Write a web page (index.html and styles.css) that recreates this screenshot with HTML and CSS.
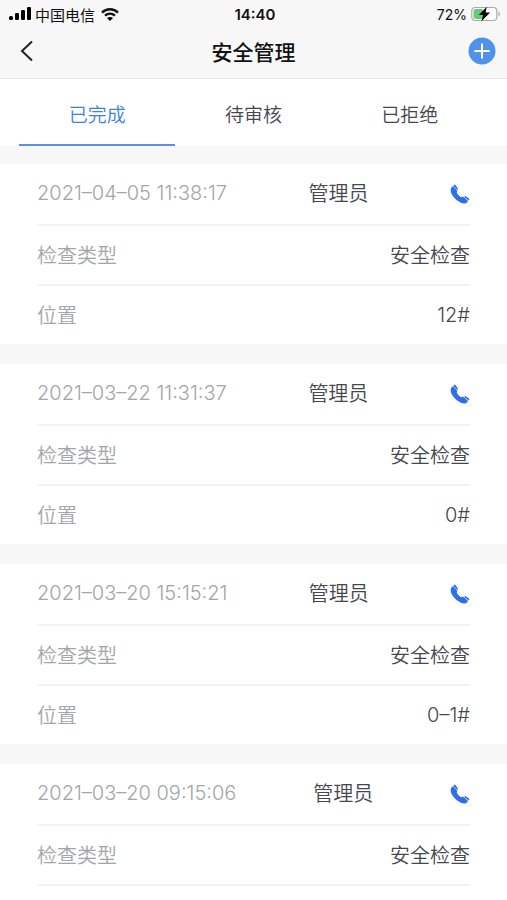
FILE: index.html
```
<!DOCTYPE html>
<html lang="zh-CN">
<head>
  <meta charset="utf-8">
  <title>安全管理</title>
  <meta name="viewport" content="width=device-width, initial-scale=1">
  <link rel="stylesheet" href="styles.css">
</head>
<body>
  <svg class="sprite" aria-hidden="true">
    <symbol id="phone" viewBox="0 0 20 20">
      <path d="M1.200 3.500 C0 6 .8 8.800 2.200 11 C4.200 14.200 7.400 17 10.600 18.500 C12.800 19.600 15.600 19.900 17 18.600 L12 13.600 C9.600 12.600 7.700 10.800 6.600 8.300 Z"/>
      <path d="M1.200 4 L5.800 9.300 L6.900 8.100 C7.400 7.500 7.300 7 7 6.500 L3.200 2 Z"/>
      <path d="M3.300 1.400 L4.200 .8 C4.700 .5 5.200 .6 5.500 1 L7.800 4.400 C8.100 4.900 8 5.400 7.600 5.800 L7.200 6.100 Z"/>
      <path d="M10.600 14.200 L12.100 13 C12.600 12.700 13.100 12.700 13.500 13 L18 16.900 L16.600 18.700 Z"/>
      <path d="M14 12.900 L14.700 12.400 C15.200 12.100 15.700 12.200 16.100 12.500 L18.900 14.600 C19.400 15 19.400 15.500 19.100 15.900 L18.600 16.500 Z"/>
    </symbol>
  </svg>

  <header class="header">
    <div class="status">
      <div class="carrier">
        <svg width="22" height="14" viewBox="0 0 22 14">
          <rect x="0" y="9" width="4" height="4" rx="1.500"/>
          <rect x="6" y="6" width="4" height="7" rx="1.200"/>
          <rect x="12" y="3" width="4" height="10" rx="1.200"/>
          <rect x="18" y="0" width="4" height="13" rx="1.200"/>
        </svg>
        <span>中国电信</span>
        <svg width="18" height="13" viewBox="0 0 18 13">
          <path class="arc" d="M1 4.600 C5.500 .2 12.500 .2 17 4.600"/>
          <path class="arc" d="M4 7.700 C6.900 5 11.100 5 14 7.700"/>
          <path d="M6 10 C7.700 8.500 10.300 8.500 12 10 L9 13 Z"/>
        </svg>
      </div>
      <div class="clock">14:40</div>
      <div class="power">
        <span>72%</span>
        <svg width="30" height="16" viewBox="0 0 30 16">
          <rect x=".8" y="1.500" width="25" height="13" rx="3.500" fill="#fff" stroke="#aaa" stroke-width="1.200"/>
          <path d="M27.500 5.500 C29.500 6.500 29.500 9.500 27.500 10.500 Z" fill="#aaa"/>
          <rect x="2.500" y="3" width="10" height="10" rx="2" fill="#66cc74"/>
          <path d="M15.800 .8 L7.800 9 H12.200 L10.300 15.400 L19.100 6.600 H14.600 Z" fill="#000"/>
        </svg>
      </div>
    </div>
    <nav class="nav">
      <button class="icon-btn back" aria-label="返回">
        <svg width="14" height="22" viewBox="0 0 14 22"><path class="chevron" d="M12 1.500 L2 11 L12 20.500"/></svg>
      </button>
      <h1>安全管理</h1>
      <button class="icon-btn add" aria-label="添加">
        <svg width="28" height="28" viewBox="0 0 28 28">
          <circle cx="14" cy="14" r="13.500" fill="#4f92ec"/>
          <path class="plus" d="M14 6.500 V21.500 M6.500 14 H21.500"/>
        </svg>
      </button>
    </nav>
  </header>

  <div class="tabs">
    <button class="tab active">已完成</button>
    <button class="tab">待审核</button>
    <button class="tab">已拒绝</button>
  </div>

  <main class="list">
    <section class="card">
      <div class="row">
        <span class="label">2021–04–05 11:38:17</span>
        <span>管理员</span>
        <button class="icon-btn" aria-label="电话"><svg class="phone"><use href="#phone"/></svg></button>
      </div>
      <div class="row"><span class="label">检查类型</span><span>安全检查</span></div>
      <div class="row"><span class="label">位置</span><span>12#</span></div>
    </section>
    <section class="card">
      <div class="row">
        <span class="label">2021–03–22 11:31:37</span>
        <span>管理员</span>
        <button class="icon-btn" aria-label="电话"><svg class="phone"><use href="#phone"/></svg></button>
      </div>
      <div class="row"><span class="label">检查类型</span><span>安全检查</span></div>
      <div class="row"><span class="label">位置</span><span>0#</span></div>
    </section>
    <section class="card">
      <div class="row">
        <span class="label">2021–03–20 15:15:21</span>
        <span>管理员</span>
        <button class="icon-btn" aria-label="电话"><svg class="phone"><use href="#phone"/></svg></button>
      </div>
      <div class="row"><span class="label">检查类型</span><span>安全检查</span></div>
      <div class="row"><span class="label">位置</span><span>0–1#</span></div>
    </section>
    <section class="card">
      <div class="row">
        <span class="label">2021–03–20 09:15:06</span>
        <span>管理员</span>
        <button class="icon-btn" aria-label="电话"><svg class="phone"><use href="#phone"/></svg></button>
      </div>
      <div class="row"><span class="label">检查类型</span><span>安全检查</span></div>
    </section>
  </main>
</body>
</html>
```
FILE: styles.css
```
* {
  box-sizing: border-box;
}

body {
  margin: 0;
  background: #fff;
  color: #45474e;
  font-family: Inter, "Noto Sans CJK SC", sans-serif;
  font-size: 20px;
  font-weight: 350;
}

button {
  border: 0;
  padding: 0;
  background: none;
  color: inherit;
  font: inherit;
  cursor: pointer;
}

svg {
  display: block;
}

.sprite {
  display: none;
}

.header {
  background: #f7f7f7;
  border-bottom: 1px solid #e6e6e6;
  color: #111;
}

.status {
  display: grid;
  grid-template-columns: 1fr auto 1fr;
  align-items: center;
  height: 28px;
  padding: 0 6px 0 9px;
  font-size: 15px;
  font-weight: 400;
}

.carrier,
.power {
  display: flex;
  align-items: center;
  gap: 4px;
}

.carrier span {
  margin-right: 2px;
}

.power {
  justify-content: flex-end;
  font-size: 14px;
}

.clock {
  font-weight: 600;
}

.arc {
  fill: none;
  stroke: #111;
  stroke-width: 2.4;
}

.nav {
  display: grid;
  grid-template-columns: 1fr auto 1fr;
  align-items: center;
  height: 50px;
  padding: 0 11px 4px;
}

.nav h1 {
  margin: 0;
  font-size: 21px;
  font-weight: 500;
}

.icon-btn {
  justify-self: start;
}

.back {
  padding-left: 9px;
}

.add {
  justify-self: end;
}

.chevron,
.plus {
  fill: none;
  stroke: #222;
  stroke-width: 2;
}

.plus {
  stroke: #fff;
}

.tabs {
  display: flex;
  height: 67px;
  padding: 0 19px;
}

.tab {
  flex: 1;
  padding-top: 3px;
  border-bottom: 2px solid transparent;
  font-size: 19px;
}

.tab.active {
  color: #3f7fec;
  border-color: #5a8fe8;
}

.list {
  border-top: 18px solid #f7f7f7;
}

.card {
  padding: 0 37px;
}

.card + .card {
  border-top: 20px solid #f7f7f7;
}

.row {
  display: flex;
  align-items: center;
  justify-content: space-between;
  height: 60px;
  padding-bottom: 1px;
  border-bottom: 2px solid #f3f3f3;
}

.row:first-child {
  height: 62px;
  padding-bottom: 3px;
}

.row:nth-child(3) {
  height: 58px;
  border-bottom: 0;
}

.label {
  color: #a3a5a9;
}

.phone {
  width: 20px;
  height: 20px;
  margin-top: 3px;
  fill: #2c6fe8;
}
```
